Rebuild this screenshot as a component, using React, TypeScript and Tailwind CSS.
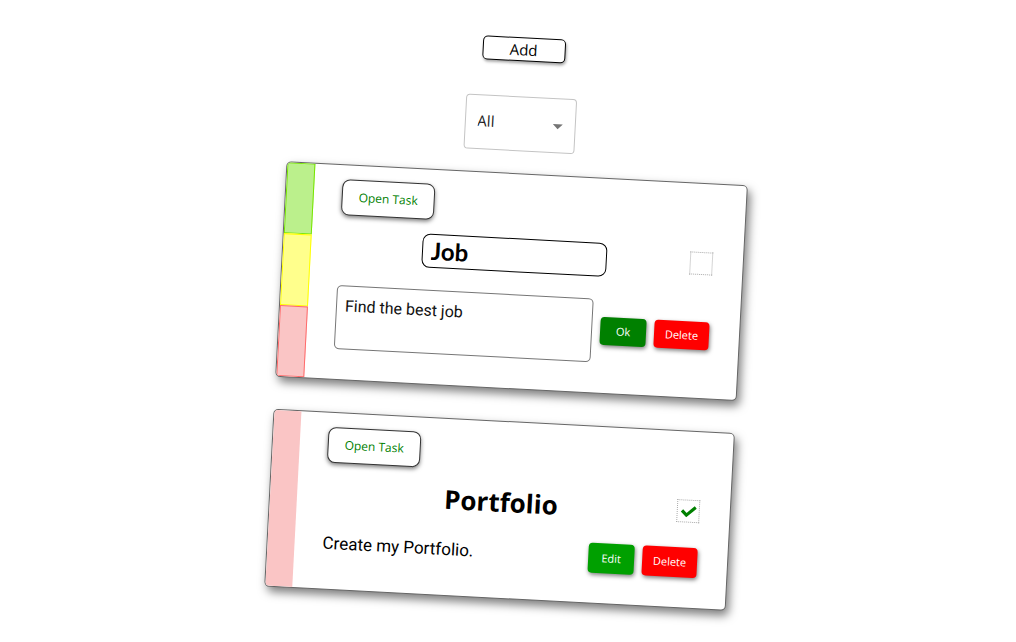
import { useState } from 'react';
import type { ReactNode } from 'react';

function OpenTaskButton() {
  return (
    <button
      type="button"
      className="block h-9 w-[93px] rounded-lg border border-[#333] bg-white text-xs text-[#008000] shadow-[0_2px_4px_rgba(0,0,0,0.5)]"
    >
      Open Task
    </button>
  );
}

function ActionButton({ children, className }: { children: ReactNode; className: string }) {
  return (
    <button
      type="button"
      className={`shrink-0 rounded text-[11px] text-white shadow-[1px_2px_4px_rgba(0,0,0,0.5)] ${className}`}
    >
      {children}
    </button>
  );
}

function DoneBox({ label, initial }: { label: string; initial: boolean }) {
  const [done, setDone] = useState(initial);
  return (
    <label className="relative grid size-[23px] shrink-0 place-items-center">
      <input
        type="checkbox"
        aria-label={label}
        checked={done}
        onChange={() => setDone(!done)}
        className="size-full appearance-none border border-dotted border-[#aaa]"
      />
      {done && (
        <svg viewBox="0 0 16 12" className="pointer-events-none absolute h-3 w-4" fill="none">
          <path d="M1.2 5 L5.8 9.6 L14.8 1.4" stroke="#008000" strokeWidth="3.2" />
        </svg>
      )}
    </label>
  );
}

function Card({ strip, children }: { strip: ReactNode; children: ReactNode }) {
  return (
    <article className="flex w-full max-w-[462px] overflow-hidden rounded-[5px] border border-[#666] bg-white shadow-[3px_5px_10px_rgba(0,0,0,0.5)]">
      {strip}
      <div className="min-w-0 flex-1 pt-3.5 pr-[30px] pb-[30px] pl-7">{children}</div>
    </article>
  );
}

export default function App() {
  const [title, setTitle] = useState('Job');
  const [text, setText] = useState('Find the best job');
  return (
    <div className="min-h-screen overflow-hidden bg-white font-['Open_Sans','Noto_Sans',sans-serif] text-black">
      <main className="flex origin-[50%_349px] rotate-3 flex-col items-center pt-[37px]">
        <button
          type="button"
          className="h-6 w-[83px] rounded-[5px] border border-black bg-white text-[15px] leading-5 shadow-[1px_2px_3px_rgba(0,0,0,0.35)]"
        >
          Add
        </button>

        <div className="relative mt-[35px] w-[111px]">
          <select
            aria-label="Filter tasks"
            className="h-[55px] w-full appearance-none rounded border border-[#c4c4c4] bg-white pb-0.5 pl-3 text-[15px] text-[#212121]"
          >
            <option>All</option>
            <option>Done</option>
            <option>Open</option>
          </select>
          <svg
            viewBox="0 0 24 24"
            className="pointer-events-none absolute top-4 right-1.5 size-6 fill-[#757575]"
          >
            <path d="M7 10l5 5 5-5z" />
          </svg>
        </div>

        <section className="mt-[22px] flex w-full flex-col items-center gap-8">
          <Card
            strip={
              <div className="flex w-7 flex-col">
                <button type="button" aria-label="Low priority" className="flex-1 border border-[#77e600] bg-[#bbf08c]" />
                <button type="button" aria-label="Medium priority" className="flex-1 border border-[#ffff00] bg-[#ffff8c]" />
                <button type="button" aria-label="High priority" className="flex-1 border border-[#ff6b6b] bg-[#fac5c5]" />
              </div>
            }
          >
            <OpenTaskButton />
            <div className="mt-3.5 flex items-start">
              <div className="flex h-[34px] flex-1 justify-center">
                <input
                  aria-label="Task title"
                  value={title}
                  onChange={(e) => setTitle(e.target.value)}
                  className="w-[185px] rounded-lg border border-black px-2 font-['Lato','Open_Sans',sans-serif] text-2xl font-bold"
                />
              </div>
              <div className="pt-1">
                <DoneBox label="Job done" initial={false} />
              </div>
            </div>
            <div className="mt-[22px] flex items-center gap-2">
              <textarea
                aria-label="Task description"
                value={text}
                onChange={(e) => setText(e.target.value)}
                className="block h-16 min-w-0 flex-1 resize-none rounded-[5px] border border-[#767676] px-2 py-2 font-['Roboto',sans-serif] text-base text-[#111]"
              />
              <ActionButton className="h-7 w-[46px] bg-[#008000]">Ok</ActionButton>
              <ActionButton className="h-7 w-[55px] bg-[#ff0000]">Delete</ActionButton>
            </div>
          </Card>

          <Card strip={<div className="w-[27px] bg-[#fac5c5]" />}>
            <OpenTaskButton />
            <div className="mt-3.5 flex items-start">
              <h2 className="h-[34px] flex-1 text-center text-[26px] leading-8 font-bold">Portfolio</h2>
              <div className="pt-1">
                <DoneBox label="Portfolio done" initial={true} />
              </div>
            </div>
            <div className="mt-[18px] flex items-center gap-2">
              <p className="min-w-0 flex-1 font-['Roboto',sans-serif] text-[17px]">Create my Portfolio.</p>
              <ActionButton className="h-[30px] w-[46px] bg-[#00a000]">Edit</ActionButton>
              <ActionButton className="h-[30px] w-[55px] bg-[#ff0000]">Delete</ActionButton>
            </div>
          </Card>
        </section>
      </main>
    </div>
  );
}
